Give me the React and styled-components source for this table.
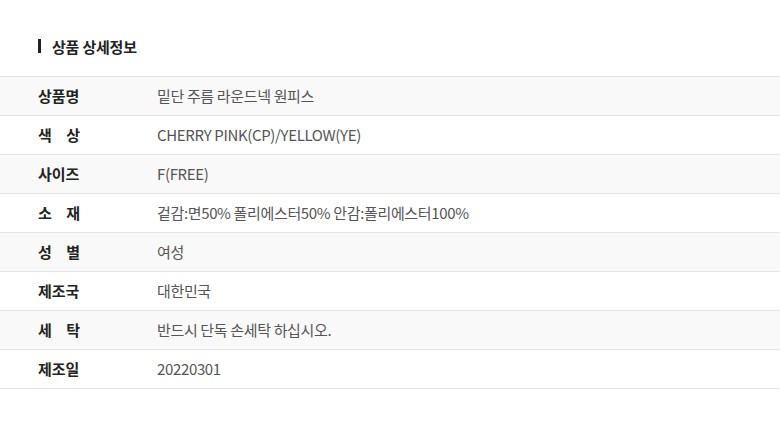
import React from "react";
import styled, { createGlobalStyle } from "styled-components";

const Global = createGlobalStyle`
  html, body { margin: 0; padding: 0; background: #fff; }
  body { font-family: "Noto Sans CJK KR", "Noto Sans", sans-serif; }
`;

const Wrap = styled.section`
  width: 780px;
  padding-top: 36px;
`;

const Title = styled.h2`
  margin: 0 0 20px 38px;
  height: 20px;
  display: flex;
  align-items: center;
  gap: 11px;
  font-size: 15px;
  font-weight: 700;
  color: #222;
  letter-spacing: -0.2px;
  &::before {
    content: "";
    width: 3px;
    height: 14px;
    background: #222;
  }
`;

const Table = styled.div`
  border-top: 1px solid #e3e3e3;
`;

const Row = styled.div`
  display: flex;
  align-items: center;
  height: 38px;
  padding-bottom: 1px;
  box-sizing: border-box;
  height: 39px;
  border-bottom: 1px solid #e3e3e3;
  background: ${(p) => (p.$shaded ? "#f9f9f9" : "#fff")};
`;

const Label = styled.div`
  width: 42px;
  margin-left: 38px;
  margin-right: 77px;
  font-size: 15px;
  font-weight: 700;
  color: #222;
  text-align: justify;
  text-align-last: justify;
  white-space: nowrap;
`;

const Value = styled.div`
  font-size: 15px;
  color: #555;
  letter-spacing: -0.35px;
`;

const rows = [
  ["상품명", "밑단 주름 라운드넥 원피스"],
  ["색 상", "CHERRY PINK(CP)/YELLOW(YE)"],
  ["사이즈", "F(FREE)"],
  ["소 재", "겉감:면50% 폴리에스터50% 안감:폴리에스터100%"],
  ["성 별", "여성"],
  ["제조국", "대한민국"],
  ["세 탁", "반드시 단독 손세탁 하십시오."],
  ["제조일", "20220301"],
];

export default function App() {
  return (
    <>
      <Global />
      <Wrap>
        <Title>상품 상세정보</Title>
        <Table>
          {rows.map(([k, v], i) => (
            <Row key={k} $shaded={i % 2 === 0}>
              <Label>{k}</Label>
              <Value>{v}</Value>
            </Row>
          ))}
        </Table>
      </Wrap>
    </>
  );
}
